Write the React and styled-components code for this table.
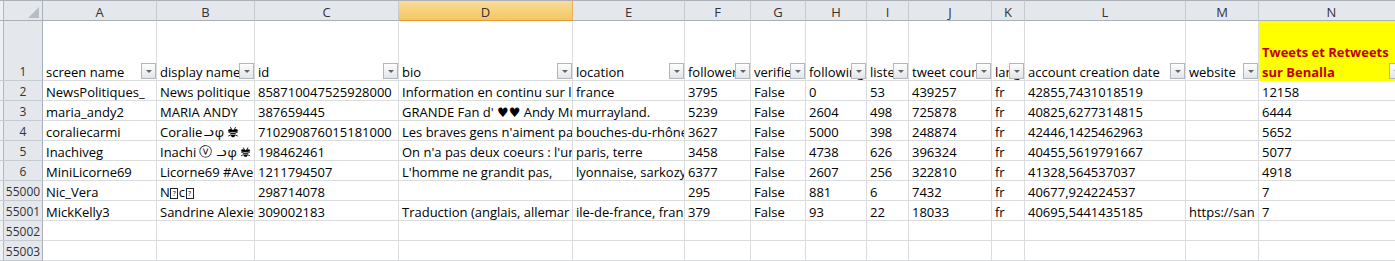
import React from "react";
import styled, { createGlobalStyle } from "styled-components";

const GlobalStyle = createGlobalStyle`
  html, body {
    margin: 0;
    padding: 0;
    background: #ffffff;
  }
  body {
    font-family: "Open Sans", "DejaVu Sans", sans-serif;
  }
`;

const COL_WIDTHS = [43, 114, 98, 144, 174, 112, 66, 55, 61, 42, 83, 33, 161, 73, 146];
const LETTERS = "ABCDEFGHIJKLMN".split("");
const ACTIVE_COL = "D";

const HEADERS = [
  "screen name",
  "display name",
  "id",
  "bio",
  "location",
  "followers",
  "verified",
  "following",
  "listed",
  "tweet count",
  "lang",
  "account creation date",
  "website",
];

const Sheet = styled.div`
  display: grid;
  grid-template-columns: ${COL_WIDTHS.map((w) => w + "px").join(" ")};
  grid-template-rows: 21px 60px repeat(9, 20px);
  width: 1395px;
  height: 261px;
  overflow: hidden;
  background: #ffffff;
  font-family: "Open Sans", "DejaVu Sans", sans-serif;
`;

const Corner = styled.div`
  box-sizing: border-box;
  background: #e4e8ed;
  border-top: 1px solid #aab0b8;
  border-right: 1px solid #aab0b8;
  border-bottom: 1px solid #aab0b8;
  box-shadow: inset 3px 0 0 #eef0f3, inset 4px 0 0 #b3b8bf;
  display: flex;
  align-items: flex-end;
  justify-content: flex-end;
  padding: 0 3px 2px 0;
`;

const ColHead = styled.div`
  box-sizing: border-box;
  background: ${(p) => (p.$active ? "linear-gradient(#f9dc98, #f3c664)" : "#e4e8ed")};
  border-top: 1px solid #aab0b8;
  border-right: 1px solid ${(p) => (p.$active ? "#e6b35a" : "#c6cbd2")};
  border-bottom: 1px solid ${(p) => (p.$active ? "#e39b36" : "#aab0b8")};
  display: flex;
  align-items: flex-end;
  justify-content: center;
  font-size: 13px;
  line-height: 16px;
  color: #333333;
`;

const RowHead = styled.div`
  box-sizing: border-box;
  background: #e4e8ed;
  border-right: 1px solid #aab0b8;
  border-bottom: 1px solid #c6cbd2;
  box-shadow: inset 3px 0 0 #eef0f3, inset 4px 0 0 #b3b8bf;
  padding-left: 4px;
  display: flex;
  align-items: flex-end;
  justify-content: center;
  font-size: 12px;
  line-height: 16px;
  color: #333333;
`;

const Cell = styled.div`
  position: relative;
  box-sizing: border-box;
  min-width: 0;
  background: ${(p) => p.$fill || "#ffffff"};
  border-right: 1px solid #dadcdd;
  border-bottom: 1px solid ${(p) => p.$fill || "#dadcdd"};
  padding: 0 3px;
  overflow: hidden;
  white-space: nowrap;
  display: flex;
  align-items: flex-end;
  font-size: 13px;
  line-height: 16px;
  color: #000000;
`;

const Wrapped = styled.div`
  display: flex;
  flex-direction: column;
  gap: 4px;
  font-size: 13px;
  font-weight: 700;
  color: #c00000;
`;

const FilterButton = styled.span`
  position: absolute;
  right: 0;
  bottom: 1px;
  width: 15px;
  height: 16px;
  box-sizing: border-box;
  border: 1px solid #b3b7bd;
  background: linear-gradient(#fdfdfd, #e2e5e9);
  &::after {
    content: "";
    position: absolute;
    left: 4px;
    top: 6px;
    border-left: 3px solid transparent;
    border-right: 3px solid transparent;
    border-top: 3px solid #606366;
  }
`;

const Tofu = styled.span`
  display: inline-block;
  box-sizing: border-box;
  width: 8px;
  height: 11px;
  margin: 0 0.5px 1px;
  border: 1px solid #222222;
  font-size: 7px;
  line-height: 9px;
  text-align: center;
`;

const Glyph = styled.span`
  font-family: "DejaVu Sans", sans-serif;
  font-size: ${(p) => p.$size || 12}px;
  margin: 0 ${(p) => p.$gap || 1}px;
`;

const Bee = () => (
  <svg width="12" height="12" viewBox="0 0 16 16" style={{ marginLeft: 3, marginBottom: 2 }}>
    <path d="M6.5 5 L4.5 1.5 M9.5 5 L11.5 1.5" stroke="#000" strokeWidth="1.2" fill="none" />
    <ellipse cx="4.5" cy="6" rx="3" ry="2" fill="#000" />
    <ellipse cx="11.5" cy="6" rx="3" ry="2" fill="#000" />
    <ellipse cx="8" cy="10" rx="3.3" ry="5" fill="#000" />
    <path d="M5 8.6h6M5 11.2h6" stroke="#fff" strokeWidth="1" />
    <path d="M4.8 9.5 L1.5 8 M4.8 12 L1.5 13.5 M11.2 9.5 L14.5 8 M11.2 12 L14.5 13.5" stroke="#000" strokeWidth="1.1" />
  </svg>
);

const Triangle = () => (
  <svg width="11" height="11" viewBox="0 0 11 11">
    <polygon points="11,0 11,11 0,11" fill="#b8bdc4" />
  </svg>
);

const ROWS = [
  {
    n: "2",
    cells: ["NewsPolitiques_", "News politique", "858710047525928000", "Information en continu sur l", "france", "3795", "False", "0", "53", "439257", "fr", "42855,7431018519", "", "12158"],
  },
  {
    n: "3",
    cells: ["maria_andy2", "MARIA ANDY", "387659445", "GRANDE Fan d' \u2665\u2665 Andy Mu", "murrayland.", "5239", "False", "2604", "498", "725878", "fr", "40825,6277314815", "", "6444"],
  },
  {
    n: "4",
    cells: [
      "coraliecarmi",
      <>
        Coralie<Glyph>ᓗ</Glyph>φ<Bee />
      </>,
      "710290876015181000",
      "Les braves gens n'aiment pa",
      "bouches-du-rhône",
      "3627", "False", "5000", "398", "248874", "fr", "42446,1425462963", "", "5652",
    ],
  },
  {
    n: "5",
    cells: [
      "Inachiveg",
      <>
        Inachi<Glyph $size={13} $gap={3}>ⓥ</Glyph><Glyph>ᓗ</Glyph>φ<Bee />
      </>,
      "198462461",
      "On n'a pas deux coeurs : l'un",
      "paris, terre",
      "3458", "False", "4738", "626", "396324", "fr", "40455,5619791667", "", "5077",
    ],
  },
  {
    n: "6",
    cells: ["MiniLicorne69", "Licorne69 #Ave", "1211794507", "L'homme ne grandit pas,", "lyonnaise, sarkozy", "6377", "False", "2607", "256", "322810", "fr", "41328,564537037", "", "4918"],
  },
  {
    n: "55000",
    cells: [
      "Nic_Vera",
      <>
        N<Tofu>?</Tofu>c<Tofu>?</Tofu>
      </>,
      "298714078", "", "", "295", "False", "881", "6", "7432", "fr", "40677,924224537", "", "7",
    ],
  },
  {
    n: "55001",
    cells: ["MickKelly3", "Sandrine Alexie", "309002183", "Traduction (anglais, allemar", "ile-de-france, fran", "379", "False", "93", "22", "18033", "fr", "40695,5441435185", "https://san", "7"],
  },
  { n: "55002", cells: Array(14).fill("") },
  { n: "55003", cells: Array(14).fill("") },
];

export default function App() {
  return (
    <>
      <GlobalStyle />
      <Sheet>
        <Corner>
          <Triangle />
        </Corner>
        {LETTERS.map((l) => (
          <ColHead key={l} $active={l === ACTIVE_COL}>
            {l}
          </ColHead>
        ))}

        <RowHead>1</RowHead>
        {HEADERS.map((h) => (
          <Cell key={h}>
            {h}
            <FilterButton />
          </Cell>
        ))}
        <Cell $fill="#ffff00">
          <Wrapped>
            <span>Tweets et Retweets</span>
            <span>sur Benalla</span>
          </Wrapped>
          <FilterButton />
        </Cell>

        {ROWS.map((row) => (
          <React.Fragment key={row.n}>
            <RowHead>{row.n}</RowHead>
            {row.cells.map((c, i) => (
              <Cell key={i}>{c}</Cell>
            ))}
          </React.Fragment>
        ))}
      </Sheet>
    </>
  );
}
